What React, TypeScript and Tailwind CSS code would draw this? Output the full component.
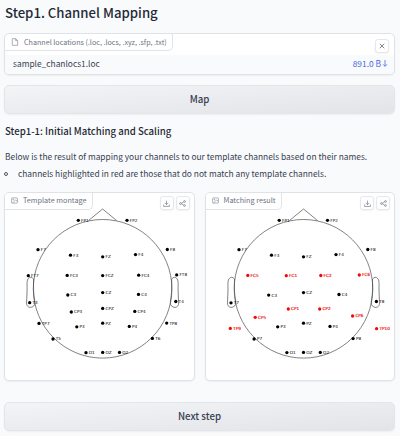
import type { ReactNode } from 'react';

type Channel = [name: string, x: number, y: number, unmatched?: boolean];

const template: Channel[] = [
  ['FP1', 78.3, 220.3], ['FP2', 127, 220.3], ['F7', 38, 249.7], ['F8', 167.3, 249.5],
  ['F3', 70.5, 255.2], ['FZ', 102.7, 256.8], ['F4', 135.5, 254.6], ['FT7', 28.3, 275.7],
  ['FC3', 67.2, 275.4], ['FCZ', 102.7, 275.6], ['FC4', 138.7, 275.2], ['FT8', 176.7, 274.9],
  ['T3', 29.7, 302.7], ['C3', 67.8, 295], ['CZ', 102.7, 292.6], ['C4', 138.5, 294.4],
  ['T4', 175.8, 301.5], ['CP3', 71.3, 312], ['CPZ', 102.7, 308.4], ['CP4', 134.8, 311.4],
  ['TP7', 39, 323.4], ['P3', 76.8, 326.8], ['PZ', 102.7, 323.2], ['P4', 129.3, 326.4],
  ['TP8', 166.7, 323.1], ['T5', 53, 339], ['T6', 152.4, 338.4], ['O1', 86, 352.7],
  ['OZ', 102.7, 352.4], ['O2', 119.5, 352.4],
];

const matched: Channel[] = [
  ['FP1', 279.2, 220.3], ['FP2', 327.5, 220.3], ['F7', 239, 249.7], ['F8', 367.8, 249.5],
  ['F3', 271.5, 255.2], ['FZ', 303.5, 256.8], ['F4', 336, 254.6], ['FC5', 247.8, 275.4, true],
  ['FC1', 286.3, 275.7, true], ['FC2', 320.8, 275.5, true], ['FC6', 359.3, 275, true],
  ['C3', 268.7, 295.1], ['CZ', 303.5, 292.6], ['C4', 339, 294.5], ['T7', 231, 302.8],
  ['T8', 376.4, 301.5], ['CP5', 255.2, 317.3, true], ['CP1', 288.3, 309, true],
  ['CP2', 319.7, 309, true], ['CP6', 352.6, 316, true], ['TP9', 230.3, 328.4, true],
  ['TP10', 376.6, 328.7, true], ['P3', 277.7, 326.8], ['PZ', 303.5, 323.2],
  ['P4', 330, 326.4], ['P7', 254.1, 339], ['P8', 353.1, 338.6], ['O1', 286.9, 352.6],
  ['OZ', 303.5, 352.4], ['O2', 320.3, 352.4],
];

function HeadMap({ channels, left, cx }: { channels: Channel[]; left: number; cx: number }) {
  return (
    <svg className="block h-[187px] w-full" viewBox={`${left} 193 188 187`} preserveAspectRatio="xMinYMin meet">
      <g fill="none" stroke="#4d4d4d" strokeWidth="0.7" transform={`translate(${cx} 0)`}>
        <circle cx="0" cy="288.8" r="69.3" />
        <path d="M-14 220.5 L0 209 L14 220.5" />
        <path d="M-69 279 C-71 277 -72.5 276.7 -74 278.3 C-76 280 -75.5 284 -75.5 290 L-76 303 C-76 307 -73 308 -70.5 307 C-68 306 -67.5 304 -67.8 301 C-68.8 296 -69.3 291 -69 279" />
        <path d="M69 279 C71 277 72.5 276.7 74 278.3 C76 280 75.5 284 75.5 290 L76 303 C76 307 73 308 70.5 307 C68 306 67.5 304 67.8 301 C68.8 296 69.3 291 69 279" />
      </g>
      {channels.map(([name, x, y, unmatched]) => {
        const color = unmatched ? '#f00b0b' : '#000';
        return (
          <g key={name} fill={color}>
            <circle cx={x} cy={y} r="1.65" />
            <text x={x + 2.8} y={y + 1.4} fontSize="4.2" fontFamily="'DejaVu Sans', sans-serif" stroke={color} strokeWidth={unmatched ? 0.15 : 0} textRendering="geometricPrecision">
              {name}
            </text>
          </g>
        );
      })}
    </svg>
  );
}

function ImageIcon() {
  return (
    <svg className="size-[7px]" viewBox="0 0 24 24" fill="none" stroke="#848b98" strokeWidth="2.2">
      <rect x="2" y="3" width="20" height="18" rx="2" />
      <circle cx="8" cy="9" r="1.5" />
      <path d="M22 15l-6-5L5 21" />
    </svg>
  );
}

function IconButton({ children }: { children: ReactNode }) {
  return (
    <div className="flex size-[14px] items-center justify-center rounded-[3px] border border-[#e5e7eb] bg-white shadow-xs">
      {children}
    </div>
  );
}

function Panel({ title, children }: { title: string; children: ReactNode }) {
  return (
    <section className="relative h-[189px] overflow-hidden rounded-[5px] border border-[#dfe2e7] bg-white shadow-xs">
      {children}
      <div className="absolute top-0 left-0 flex h-[17px] items-center gap-[5px] rounded-br-[5px] border-r border-b border-[#e0e3e8] bg-white pr-[5px] pb-px pl-[6px] text-[7.25px] whitespace-nowrap text-[#6b7280]">
        <ImageIcon />
        <span>{title}</span>
      </div>
      <div className="absolute top-[3px] right-[4px] flex gap-[2px]">
        <IconButton>
          <svg className="size-[7px]" viewBox="0 0 24 24" fill="none" stroke="#6b7280" strokeWidth="2.2">
            <path d="M12 2v14M6 10l6 6 6-6M2 16v6h20v-6" />
          </svg>
        </IconButton>
        <IconButton>
          <svg className="size-[7px]" viewBox="0 0 24 24" fill="none" stroke="#6b7280" strokeWidth="2.2">
            <circle cx="19" cy="5" r="3" />
            <circle cx="5" cy="12" r="3" />
            <circle cx="19" cy="19" r="3" />
            <path d="M8 11l8-4.500M8 13l8 4.500" />
          </svg>
        </IconButton>
      </div>
    </section>
  );
}

function WideButton({ children }: { children: ReactNode }) {
  return (
    <button className="flex h-[29px] w-full items-center justify-center rounded-[5px] border border-[#e3e5e9] bg-linear-to-br from-[#f3f4f6] to-[#e2e4e8] pb-px text-[9.7px] font-medium text-[#374151] shadow-xs">
      {children}
    </button>
  );
}

export default function App() {
  return (
    <main className="h-[436px] w-[400px] overflow-hidden bg-[#f9fafb] pr-[5px] pl-[4px] font-['Noto_Sans_CJK_SC','Noto_Sans',sans-serif] text-[#1f2937]">
      <h1 className="flex h-[33px] items-center pb-[8px] pl-px text-[13.2px] font-medium">Step1. Channel Mapping</h1>

      <section className="h-[42px] overflow-hidden rounded-[5px] border border-[#dfe2e7] bg-white shadow-xs">
        <div className="flex h-[21px] items-start justify-between">
          <div className="flex h-[17px] items-center gap-[5px] rounded-br-[5px] border-r border-b border-[#e0e3e8] pr-[5px] pl-[6px] text-[7.17px] whitespace-nowrap text-[#6b7280]">
            <svg className="size-[8px]" viewBox="0 0 24 24" fill="none" stroke="#848b98" strokeWidth="2">
              <path d="M14 2H4v20h16V8zM14 2v6h6" />
            </svg>
            <span>Channel locations (.loc, .locs, .xyz, .sfp, .txt)</span>
          </div>
          <div className="mt-[5px] mr-[5px]">
            <IconButton>
              <svg className="size-[6px]" viewBox="0 0 24 24" fill="none" stroke="#6b7280" strokeWidth="3.5">
                <path d="M3 3l18 18M21 3L3 21" />
              </svg>
            </IconButton>
          </div>
        </div>
        <div className="flex h-[19px] items-center justify-between bg-[#f9fafb] pr-[6px] pb-[2px] pl-[8px] text-[8.4px] text-[#374151]">
          <span>sample_chanlocs1.loc</span>
          <span className="flex items-center gap-px text-[#4668e4]">
            891.0 B
            <svg className="h-[7px] w-[6px]" viewBox="0 0 6 7" fill="none" stroke="#4668e4" strokeWidth="0.8">
              <path d="M3 0v6.300M1 4.300l2 2 2-2" />
            </svg>
          </span>
        </div>
      </section>

      <div className="mt-[10px]"><WideButton>Map</WideButton></div>

      <h2 className="mt-[8px] flex h-[18px] items-center pl-px text-[9.6px] font-medium">Step1-1: Initial Matching and Scaling</h2>
      <p className="mt-[8px] flex h-[17px] items-center pb-px pl-px text-[8.38px] whitespace-nowrap text-[#374151]">
        Below is the result of mapping your channels to our template channels based on their names.
      </p>
      <ul>
        <li className="flex h-[18px] items-center gap-[10px] pb-px text-[8.38px] whitespace-nowrap text-[#374151]">
          <span className="size-[4px] rounded-full border border-[#4b5563]" />
          channels highlighted in red are those that do not match any template channels.
        </li>
      </ul>

      <div className="mt-[9px] grid grid-cols-2 gap-[10px]">
        <Panel title="Template montage">
          <HeadMap channels={template} left={5} cx={102.6} />
        </Panel>
        <Panel title="Matching result">
          <HeadMap channels={matched} left={206} cx={303.5} />
        </Panel>
      </div>

      <div className="mt-[21px]"><WideButton>Next step</WideButton></div>
    </main>
  );
}
